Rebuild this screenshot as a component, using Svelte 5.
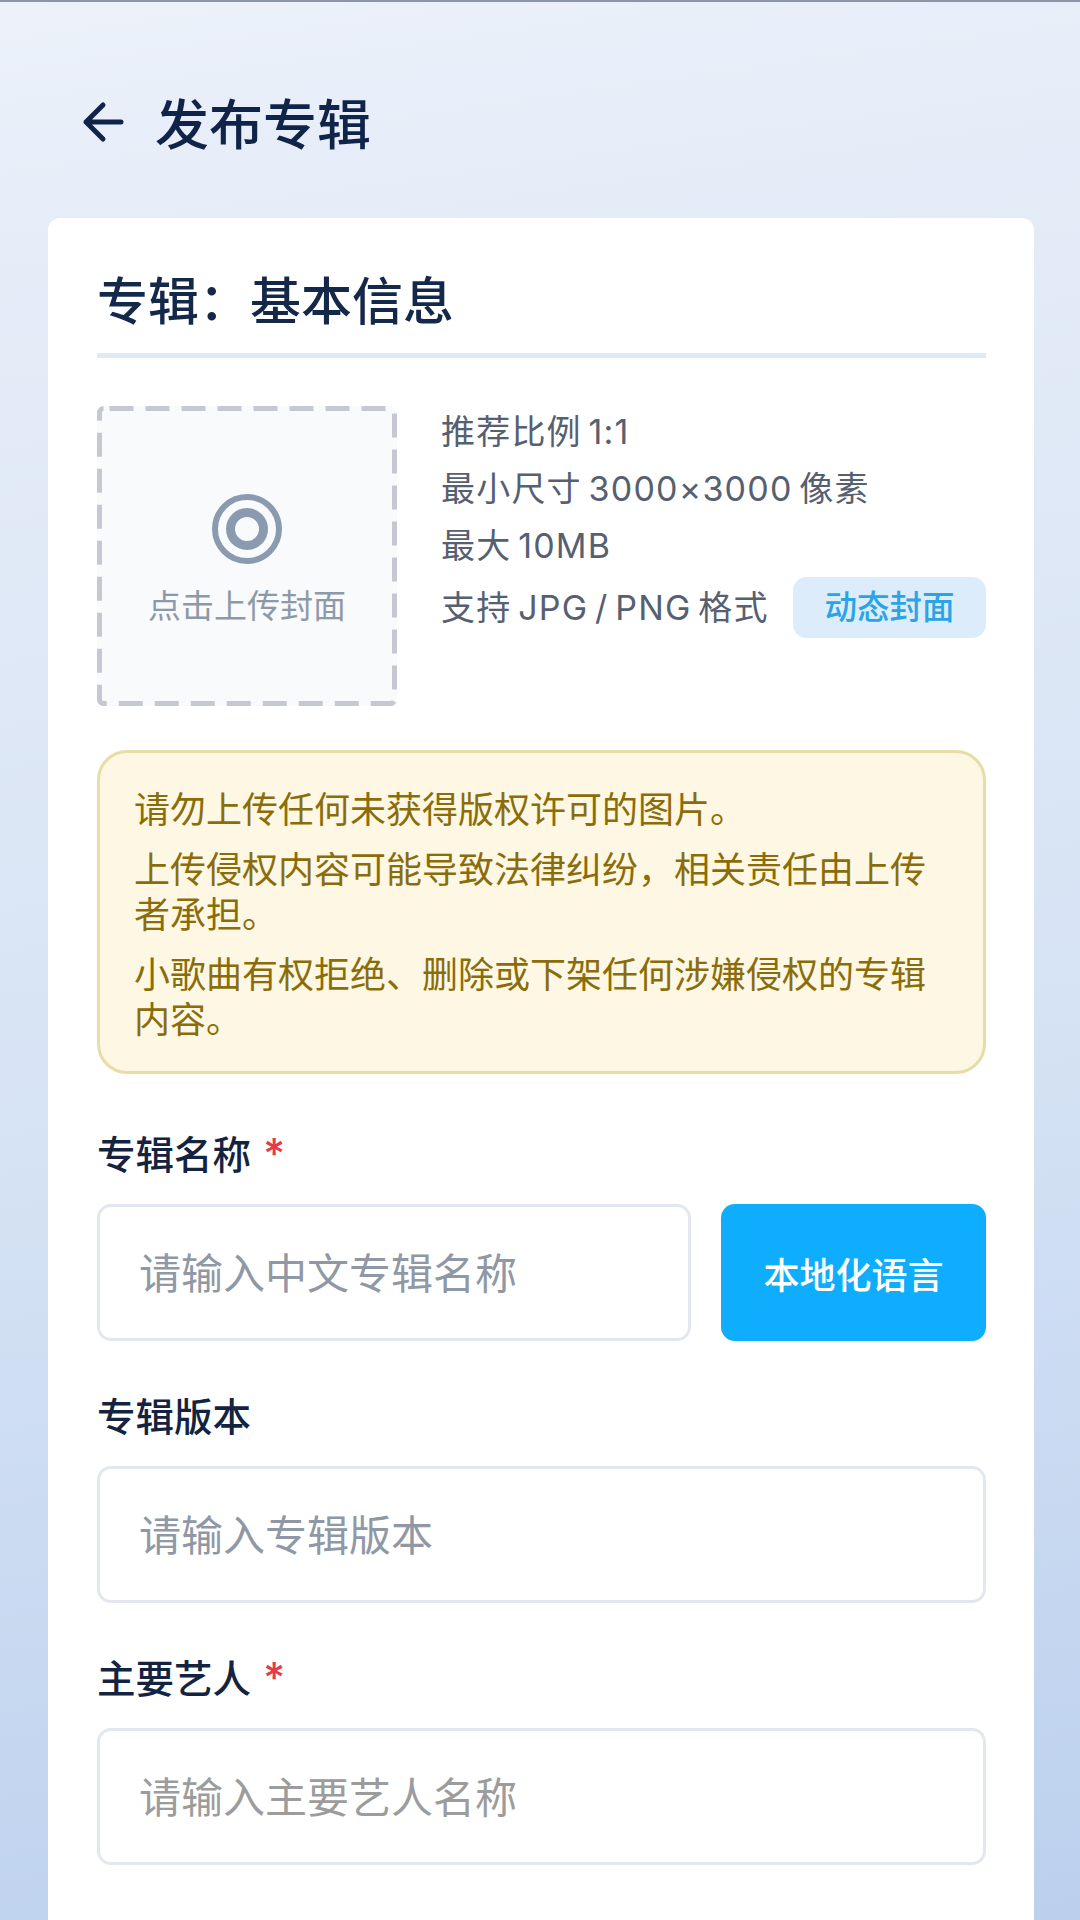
<script lang="ts">
  let zh = '';
  let version = '';
  let artist = '';

  const notes = ['推荐比例 1:1', '最小尺寸 3000×3000 像素', '最大 10MB'];
</script>

<div class="page" lang="zh-CN">
  <header class="top">
    <button class="back" aria-label="返回">
      <svg viewBox="0 0 42 42" width="42" height="42" fill="none" stroke="#10244a" stroke-width="5" stroke-linecap="round" stroke-linejoin="round">
        <path d="M39 21H4M21 4 4 21l17 17" />
      </svg>
    </button>
    <h1>发布专辑</h1>
  </header>

  <main class="card">
    <h2>专辑&#xFF1A;基本信息</h2>

    <section class="cover-row">
      <div class="cover">
        <svg class="dashes" viewBox="0 0 300 300" width="300" height="300" fill="none">
          <rect x="2.5" y="2.5" width="295" height="295" rx="4" stroke="#c3c8d2" stroke-width="5" stroke-dasharray="24 12" stroke-dashoffset="-6" />
        </svg>
        <svg viewBox="0 0 70 70" width="70" height="70" fill="none" stroke="#8a9bb0">
          <circle cx="35" cy="35" r="32" stroke-width="6" />
          <circle cx="35" cy="35" r="16.5" stroke-width="9" />
        </svg>
        <span>点击上传封面</span>
      </div>
      <div class="notes">
        {#each notes as n}
          <p>{n}</p>
        {/each}
        <div class="notes-last">
          <p>支持 JPG / PNG 格式</p>
          <span class="tag">动态封面</span>
        </div>
      </div>
    </section>

    <section class="warn">
      <p>请勿上传任何未获得版权许可的图片。</p>
      <p>上传侵权内容可能导致法律纠纷&#xFF0C;相关责任由上传者承担。</p>
      <p>小歌曲有权拒绝、删除或下架任何涉嫌侵权的专辑内容。</p>
    </section>

    <div class="field first">
      <label for="zh">专辑名称 <em>*</em></label>
      <div class="with-btn">
        <input id="zh" bind:value={zh} placeholder="请输入中文专辑名称" />
        <button class="locale">本地化语言</button>
      </div>
    </div>

    <div class="field">
      <label for="version">专辑版本</label>
      <input id="version" bind:value={version} placeholder="请输入专辑版本" />
    </div>

    <div class="field">
      <label for="artist">主要艺人 <em>*</em></label>
      <input id="artist" class="grey" bind:value={artist} placeholder="请输入主要艺人名称" />
    </div>
  </main>
</div>

<style>
  :global(body) {
    margin: 0;
  }

  .page {
    width: 1080px;
    height: 1920px;
    box-sizing: border-box;
    overflow: hidden;
    display: flex;
    flex-direction: column;
    border-top: 2px solid #8b95a5;
    background: linear-gradient(172deg, #ecf1fa 0%, #e5ecf8 14%, #d6e3f4 55%, #bcd0ee 100%);
    font-family: Inter, 'Noto Sans CJK SC', sans-serif;
  }

  .top {
    height: 216px;
    box-sizing: border-box;
    padding: 23px 0 0 82px;
    display: flex;
    align-items: center;
    gap: 31px;
  }

  .back {
    padding: 0;
    border: 0;
    background: none;
    display: flex;
  }

  h1 {
    margin: 0;
    font-size: 54px;
    font-weight: 500;
    color: #10244a;
  }

  .card {
    flex: 1;
    margin: 0 46px 0 48px;
    padding: 0 48px 0 49px;
    background: #fff;
    border-radius: 12px 12px 0 0;
  }

  h2 {
    margin: 0;
    padding: 54px 0 21px;
    font-size: 51px;
    line-height: 60px;
    font-weight: 500;
    color: #14284a;
    border-bottom: 5px solid #dcebf7;
  }

  .cover-row {
    margin-top: 45px;
    display: flex;
    gap: 44px;
  }

  .cover {
    position: relative;
    flex: none;
    width: 300px;
    height: 300px;
    margin-top: 3px;
    box-sizing: border-box;
    padding-top: 88px;
    display: flex;
    flex-direction: column;
    align-items: center;
    gap: 20px;
    background: #f8fafc;
    border-radius: 8px;
  }

  .dashes {
    position: absolute;
    inset: 0;
  }

  .cover span {
    font-size: 33px;
    line-height: 44px;
    color: #8e99a8;
  }

  .notes {
    flex: 1;
    min-width: 0;
    color: #566070;
    font-size: 34px;
    letter-spacing: 1.2px;
    word-spacing: -4px;
    line-height: 57px;
  }

  .notes p {
    margin: 0;
    white-space: nowrap;
  }

  .notes-last {
    margin-top: 3px;
    display: flex;
    align-items: center;
    justify-content: space-between;
  }

  .tag {
    width: 193px;
    height: 61px;
    display: flex;
    align-items: center;
    justify-content: center;
    border-radius: 14px;
    background: #dcecfa;
    color: #2ba4e6;
    font-size: 32.5px;
    letter-spacing: 0;
    font-weight: 500;
  }

  .warn {
    margin-top: 44px;
    padding: 35px 34px 28px;
    display: flex;
    flex-direction: column;
    gap: 15px;
    border: 3px solid #e8dca8;
    border-radius: 30px;
    background: #fdf7e3;
    color: #8a6d0a;
    font-size: 36px;
    line-height: 45px;
  }

  .warn p {
    margin: 0;
  }

  .field {
    margin-top: 51px;
    display: flex;
    flex-direction: column;
    gap: 24px;
  }

  .field.first {
    margin-top: 56px;
  }

  label {
    font-size: 38.5px;
    line-height: 50px;
    font-weight: 500;
    color: #14233f;
  }

  em {
    font-style: normal;
    color: #e8394a;
    margin-left: 2px;
    font-size: 42px;
    line-height: 40px;
  }

  .with-btn {
    display: flex;
    gap: 30px;
  }

  .with-btn input {
    flex: 1;
    min-width: 0;
  }

  input {
    width: 100%;
    height: 137px;
    box-sizing: border-box;
    padding: 2px 39px 0;
    border: 3px solid #e3e7ef;
    border-radius: 14px;
    background: #fff;
    outline: none;
    font: inherit;
    font-size: 42px;
  }

  input::placeholder {
    color: #8f98a4;
    opacity: 1;
  }

  input.grey::placeholder {
    color: #9c9c9c;
  }

  .locale {
    flex: none;
    width: 265px;
    height: 137px;
    border: 0;
    border-radius: 14px;
    background: #0fadfd;
    color: #fff;
    font: inherit;
    font-size: 36px;
    font-weight: 500;
  }
</style>
